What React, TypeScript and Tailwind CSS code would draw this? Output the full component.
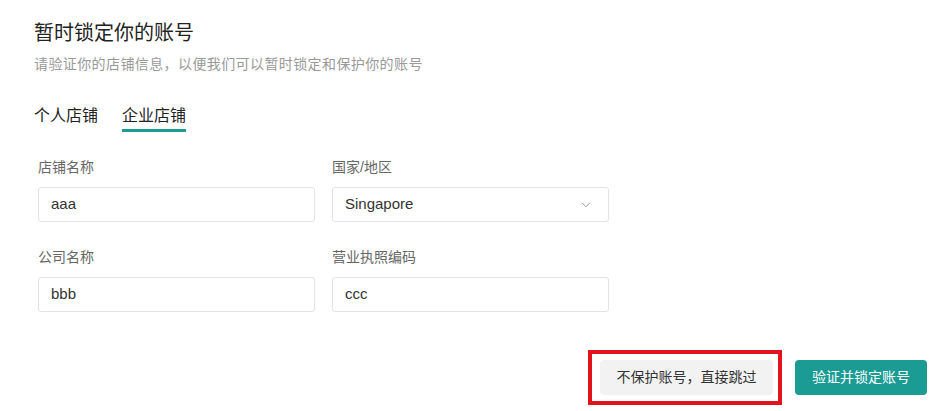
import { ChevronDown } from "lucide-react";

const font = { fontFamily: '"Liberation Sans", "Noto Sans CJK SC", sans-serif' };

const Field = ({ label, value, select }: { label: string; value: string; select?: boolean }) => (
  <div className="flex flex-col">
    <div className="text-[14px] leading-[20px] text-[#666]">{label}</div>
    <div className="mt-[10px] h-[35px] border border-[#e3e3e3] rounded-[3px] bg-white flex items-center justify-between pl-[12px] pr-[15px]">
      <span className="text-[15px] text-[#333]">{value}</span>
      {select && <ChevronDown className="w-[14px] h-[14px] text-[#888]" strokeWidth={1.5} />}
    </div>
  </div>
);

export default function App() {
  return (
    <main className="w-[948px] h-[411px] bg-white overflow-hidden pl-[34px] pt-[19px]" style={font}>
      <h1 className="text-[20px] leading-[28px] text-[#222]">暂时锁定你的账号</h1>
      <p className="mt-[7px] text-[14px] leading-[20px] text-[#999] tracking-[0.4px]">
        请验证你的店铺信息，以便我们可以暂时锁定和保护你的账号
      </p>

      <div className="mt-[30px] flex gap-[24px] text-[16px] leading-[24px] text-[#222]">
        <div className="flex flex-col">
          <span>个人店铺</span>
          <span className="mt-[1px] h-[3px]" />
        </div>
        <div className="flex flex-col">
          <span>企业店铺</span>
          <span className="mt-[1px] h-[3px] bg-[#1a9b93]" />
        </div>
      </div>

      <div className="ml-[4px] mt-[25px] grid grid-cols-[277px_277px] gap-x-[17px] gap-y-[25px]">
        <Field label="店铺名称" value="aaa" />
        <Field label="国家/地区" value="Singapore" select />
        <Field label="公司名称" value="bbb" />
        <Field label="营业执照编码" value="ccc" />
      </div>

      <div className="mt-[38px] flex justify-end items-center gap-[13px] pr-[21px]">
        <div className="border-[4px] border-[#e1141d] py-[6px] pl-[8px] pr-[5px]">
          <button className="h-[35px] w-[173px] rounded-[4px] bg-[#f2f2f2] text-[14px] text-[#333]">
            不保护账号，直接跳过
          </button>
        </div>
        <button className="h-[35px] w-[132px] rounded-[4px] bg-[#1a9b93] text-[14px] text-white">
          验证并锁定账号
        </button>
      </div>
    </main>
  );
}
